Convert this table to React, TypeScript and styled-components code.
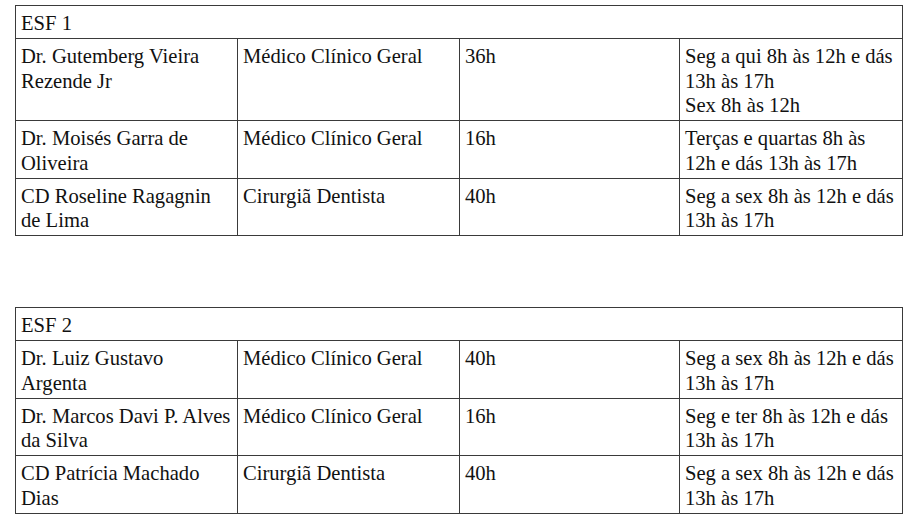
import styled, { createGlobalStyle } from 'styled-components'

const GlobalStyle = createGlobalStyle`
  body {
    margin: 0;
    background: #ffffff;
    font-family: "Liberation Serif", "Times New Roman", serif;
    color: #111111;
  }
`

type Staff = {
  name: string;
  role: string;
  hours: string;
  schedule: string[];
}

const teams: { title: string; staff: Staff[] }[] = [
  {
    title: 'ESF 1',
    staff: [
      {
        name: 'Dr. Gutemberg Vieira Rezende Jr',
        role: 'Médico Clínico Geral',
        hours: '36h',
        schedule: ['Seg a qui 8h às 12h e dás 13h às 17h', 'Sex 8h às 12h'],
      },
      {
        name: 'Dr. Moisés Garra de Oliveira',
        role: 'Médico Clínico Geral',
        hours: '16h',
        schedule: ['Terças e quartas 8h às 12h e dás 13h às 17h'],
      },
      {
        name: 'CD Roseline Ragagnin de Lima',
        role: 'Cirurgiã Dentista',
        hours: '40h',
        schedule: ['Seg a sex 8h às 12h e dás 13h às 17h'],
      },
    ],
  },
  {
    title: 'ESF 2',
    staff: [
      {
        name: 'Dr. Luiz Gustavo Argenta',
        role: 'Médico Clínico Geral',
        hours: '40h',
        schedule: ['Seg a sex 8h às 12h e dás 13h às 17h'],
      },
      {
        name: 'Dr. Marcos Davi P. Alves da Silva',
        role: 'Médico Clínico Geral',
        hours: '16h',
        schedule: ['Seg e ter 8h às 12h e dás 13h às 17h'],
      },
      {
        name: 'CD Patrícia Machado Dias',
        role: 'Cirurgiã Dentista',
        hours: '40h',
        schedule: ['Seg a sex 8h às 12h e dás 13h às 17h'],
      },
    ],
  },
]

export default function App() {
  return (
    <>
      <GlobalStyle />
      <Page>
        {teams.map((team) => (
          <Table key={team.title}>
            <colgroup>
              <col style={{ width: 222 }} />
              <col style={{ width: 222 }} />
              <col style={{ width: 220 }} />
              <col style={{ width: 223 }} />
            </colgroup>
            <tbody>
              <tr>
                <Cell colSpan={4}>{team.title}</Cell>
              </tr>
              {team.staff.map((s) => (
                <tr key={s.name}>
                  <Cell>{s.name}</Cell>
                  <Cell>{s.role}</Cell>
                  <Cell>{s.hours}</Cell>
                  <Cell>
                    {s.schedule.map((line) => (
                      <Line key={line}>{line}</Line>
                    ))}
                  </Cell>
                </tr>
              ))}
            </tbody>
          </Table>
        ))}
      </Page>
    </>
  )
}

const Page = styled.div`
  display: flex;
  flex-direction: column;
  gap: 71px;
  padding: 5px 0 0 15px;
`

const Table = styled.table`
  width: 888px;
  table-layout: fixed;
  border-collapse: collapse;
`

const Cell = styled.td`
  border: 1px solid #3a3a3a;
  padding: 5px 5px 2.5px 5px;
  vertical-align: top;
  font-size: 20.6px;
  line-height: 24.5px;
`

const Line = styled.div`
  display: block;
`
